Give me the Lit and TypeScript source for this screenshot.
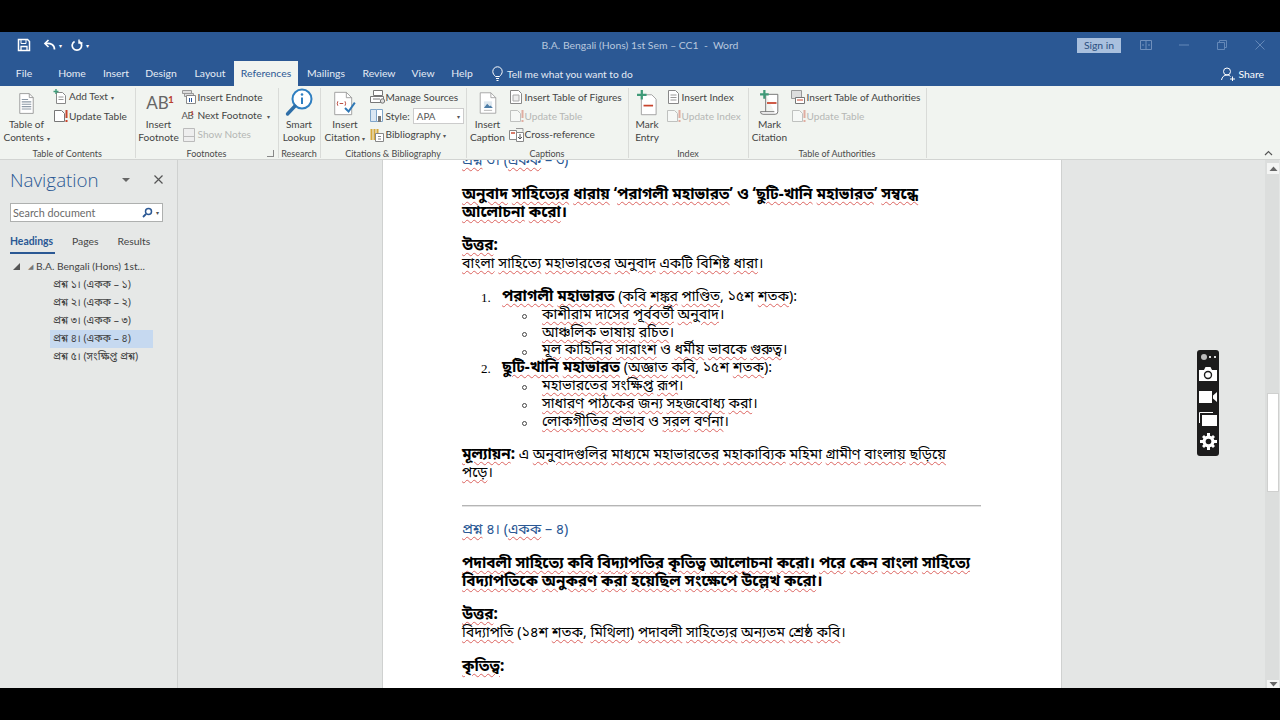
import { LitElement, html, css, svg } from "lit";
import { customElement } from "lit/decorators.js";

const ic = (w: number, h: number, body: unknown, vw = w, vh = h) =>
  html`<svg class="ic" width=${w} height=${h} viewBox="0 0 ${vw} ${vh}" fill="none">${body}</svg>`;

const smallDoc = svg`<path d="M2.5 1.5h7l3 3v10h-10z" fill="#fff" stroke="#888"/><path d="M4.5 6h6M4.5 8.5h6M4.5 11h6" stroke="#999"/>`;
const updDoc = (o: number) => svg`<g opacity=${o}><path d="M1.5 2.5h7l3 3v8h-10z" fill="#fff" stroke="#777"/><path d="M13.5 2v8M13.5 12v2" stroke="#c8442c" stroke-width="2"/></g>`;

const icons = {
  toc: ic(19, 23, svg`<path d="M3.5 1.5h12l5 5v20h-17z" fill="#fff" stroke="#8a8a8a"/><path d="M15.5 1.5v5h5" stroke="#8a8a8a"/><path d="M6 9h8M6 12h12M6 15h12M6 18h12M6 21h12" stroke="#8d99a6" stroke-width="1.4"/>`, 24, 28),
  addText: ic(16, 16, svg`<path d="M3.5 3.5h6l3 3v8h-9z" fill="#fff" stroke="#888"/><path d="M5.5 8h5M5.5 10.5h5" stroke="#999"/><path d="M3 0v5M.5 2.5h5" stroke="#3f9a78" stroke-width="1.4"/>`),
  update: ic(16, 16, updDoc(1)),
  updateDim: ic(16, 16, updDoc(0.4)),
  endnote: ic(16, 16, svg`<path d="M.5 1.5h9v3h-9zM2.5 4.5h9v3h-9z" fill="#ddd" stroke="#999"/><path d="M4.5 6.5h9v8h-9z" fill="#fff" stroke="#888"/><path d="M7.5 9v4M9.5 9v4" stroke="#2b579a"/>`),
  nextFoot: html`<span class="abf">AB<b>1</b></span>`,
  showNotes: ic(16, 16, svg`<path d="M1.5 1.5h11v13h-11z" fill="#eee" stroke="#bbb"/><path d="M1.5 9.5h11" stroke="#bbb"/>`),
  lookup: ic(28, 30, svg`<circle cx="17" cy="11" r="9.5" stroke="#2f7fc1" stroke-width="2" fill="#fff"/><path d="M10 18L2.5 26" stroke="#2f6fa8" stroke-width="3.4" stroke-linecap="round"/><circle cx="17" cy="6.5" r="1.3" fill="#2f7fc1"/><path d="M17 9.5v6.5" stroke="#2f7fc1" stroke-width="2"/>`),
  citation: ic(24, 25, svg`<path d="M1.5 1.5h13l6 6v19h-19z" fill="#fff" stroke="#999"/><path d="M14.5 1.5v6h6" stroke="#999"/><path d="M5 11.5q-1.4 3 0 5M13 11.5q1.4 3 0 5" stroke="#b33b2e"/><path d="M7 14h4" stroke="#b33b2e"/><path d="M13 19l4 4 7-10" stroke="#2f78b5" stroke-width="2.2"/>`, 26, 28),
  sources: ic(16, 16, svg`<path d="M3.5 1.5h9v5h-9z" fill="#fff" stroke="#777"/><path d="M.5 7.5h13v6h-13z" fill="#fff" stroke="#777"/><path d="M3 10h7" stroke="#777"/><circle cx="12.5" cy="12" r="2.2" fill="#ddd" stroke="#777"/>`),
  style: ic(16, 16, svg`<path d="M.5 1.5h6v12h-6z" fill="#dbe7f3" stroke="#7fa5c9"/><path d="M6.5 1.5h6v12h-6z" fill="#fff" stroke="#7fa5c9"/><path d="M8 8h3v6H8z" fill="#777"/>`),
  biblio: ic(16, 16, svg`<path d="M1.5 2v11M4.5 2v11M7.5 2v11" stroke="#d5a83c" stroke-width="2"/><path d="M5.5 6.5h8v8h-8z" fill="#fff" stroke="#888"/><path d="M8 9.5h3M8 12h3" stroke="#888"/>`),
  caption: ic(18, 24, svg`<path d="M1.5 1.5h13l6 6v19h-19z" fill="#fff" stroke="#999"/><path d="M14.5 1.5v6h6" stroke="#999"/><path d="M6 12h10v8H6z" fill="#dfe8ef"/><path d="M6 20l4-5 3 3 1-1 3 3z" fill="#4e7ea8"/><path d="M6 23h10" stroke="#aaa"/>`, 22, 28),
  figures: ic(16, 16, svg`<path d="M1.5 1.5h8l3 3v10h-11z" fill="#fff" stroke="#888"/><path d="M4 6h6v6H4z" fill="#eee" stroke="#aaa"/>`),
  crossref: ic(16, 16, svg`<path d="M.5 3.5h7v9h-7z" fill="#fff" stroke="#888"/><path d="M2 6h4" stroke="#c8442c" stroke-width="1.4"/><path d="M7.5 5.5h7v9h-7z" fill="#fff" stroke="#888"/><path d="M11 7v5M9 10l2 2 2-2" stroke="#555"/><path d="M7 1.5h7v3" stroke="#999"/>`),
  markEntry: ic(22, 26, svg`<path d="M5.5 5.5h12l5 5v18h-17z" fill="#fff" stroke="#999"/><path d="M8 18h11" stroke="#c8442c" stroke-width="2"/><path d="M6 0v11M.5 5.5h11" stroke="#3f9a78" stroke-width="2.6"/>`, 24, 30),
  index: ic(16, 16, smallDoc),
  markCite: ic(26, 26, svg`<path d="M7 5h14v20q0 3-3 3H4q-3 0-3-3h16" fill="#fff" stroke="#666"/><path d="M7 5v20" stroke="#666"/><path d="M8.5 15h11" stroke="#c8442c" stroke-width="2"/><path d="M5.5 0v10M.5 5h10" stroke="#3f9a78" stroke-width="2.6"/>`, 24, 30),
  authorities: ic(16, 16, svg`<path d="M.5 1.5h10v8H.5z" fill="#ddd" stroke="#999"/><path d="M4.5 8.5h9v6h-9z" fill="#fff" stroke="#777"/><path d="M6 11h6" stroke="#c8442c"/>`),
};

const W = (t: string) => html`<u>${t}</u>`;

@customElement("app-root")
export class AppRoot extends LitElement {
  static styles = css`
    :host { display: block; width: 1280px; height: 720px; background: #000; overflow: hidden; font-family: Lato, "Liberation Sans", sans-serif; padding-top: 32px; box-sizing: border-box; }
    .win { height: 656px; display: flex; flex-direction: column; }
    .ic { display: block; flex: none; }

    .title { height: 29px; background: #2b5894; display: grid; grid-template-columns: 1fr auto 1fr; align-items: center; color: #fff; padding-bottom: 3px; box-sizing: border-box; }
    .qat { display: flex; align-items: center; padding-left: 17px; }
    .qat .m1 { margin-left: 12px; }
    .qat .m2 { margin-left: 9px; }
    .qat .m3 { margin-left: 15px; }
    .qat .dd { font-size: 6px; margin-left: 3px; }
    .doc-title { font-size: 10.4px; color: #b9c8de; }
    .win-ctl { display: flex; align-items: center; justify-content: flex-end; padding-right: 1px; }
    .sign { width: 44px; height: 15px; background: #a9c0de; color: #2b4f80; font-size: 10.4px; line-height: 15px; text-align: center; margin-right: 6px; }
    .win-ctl .b { width: 38px; display: flex; justify-content: center; }

    .tabs { height: 25px; background: #2b5894; display: flex; align-items: flex-end; color: #e6ecf5; font-size: 10.4px; }
    .tab { height: 25px; line-height: 25px; flex: none; text-align: center; }
    .tab.on { background: #f1f4f0; color: #2b5894; }
    .tell { display: flex; align-items: center; gap: 4px; height: 25px; margin-left: 10px; font-size: 10.2px; }
    .share { margin-left: auto; margin-right: 16px; display: flex; align-items: center; gap: 3px; height: 25px; color: #fff; }

    .ribbon { height: 74px; background: #f1f4f0; border-bottom: 1px solid #d2d4d2; display: flex; position: relative; box-sizing: border-box; color: #444; font-size: 10.1px; line-height: 13px; flex: none; z-index: 1; }
    .grp { display: grid; grid-template-rows: 59px 13px; border-right: 1px solid #d9dbd8; margin: 2px 0 0; box-sizing: border-box; height: 70px; flex: none; }
    .grp .body { display: flex; min-width: 0; }
    .grp .label { text-align: center; font-size: 9px; color: #4a4a4a; line-height: 13px; white-space: nowrap; }
    .grp .label.l { position: relative; }
    .launch { position: absolute; right: 4px; top: 3px; width: 6px; height: 6px; border: 1px solid #888; border-width: 0 1px 1px 0; }
    .big { display: flex; flex-direction: column; align-items: center; flex: none; text-align: center; white-space: nowrap; }
    .big .ico { height: 30px; display: flex; align-items: center; justify-content: center; }
    .col { display: flex; flex-direction: column; flex: none; }
    .row { height: 18.7px; display: flex; align-items: center; white-space: nowrap; }
    .dim { color: #b5b7b5; }
    .caret { font-size: 6px; color: #555; }
    .abf { font-size: 9.5px; color: #555; width: 16px; position: relative; letter-spacing: -0.5px; line-height: 14px; flex: none; }
    .abf b { color: #c0392b; font-size: 6px; position: absolute; top: -3px; left: 9px; }
    .abl { font-size: 17px; color: #666; line-height: 30px; position: relative; padding-right: 2px; }
    .abl b { color: #b9402f; font-size: 10px; position: absolute; top: 1px; right: -3px; line-height: 20px; }
    .sel { width: 51px; height: 16px; border: 1px solid #ccc; background: #fff; display: flex; align-items: center; justify-content: space-between; padding: 0 3px; box-sizing: border-box; color: #555; font-size: 9.8px; margin-left: 3px; }
    .collapse { position: absolute; right: 7px; bottom: 3px; }

    .main { flex: 1; display: flex; min-height: 0; background: #e4e6e5; position: relative; }
    .nav { width: 177px; flex: none; background: #e6e8e7; border-right: 1px solid #cfd1d0; color: #444; }
    .nav-h { display: flex; align-items: center; padding: 6px 14px 0 10px; height: 27px; }
    .nav-h .n { font-family: "Open Sans", sans-serif; font-size: 18.8px; color: #2b5894; flex: 1; font-weight: 300; }
    .nav-h .tri { width: 0; height: 0; border: 4px solid transparent; border-top: 4px solid #666; border-bottom: 0; margin-right: 24px; }
    .search { margin: 10px 0 0 10px; width: 153px; height: 19px; box-sizing: border-box; background: #fff; border: 1px solid #aeb0af; display: flex; align-items: center; padding: 0 3px 0 2px; font-size: 10.8px; color: #6a6a6a; }
    .search span { flex: 1; }
    .ntabs { display: flex; margin: 10px 0 0 10px; font-size: 10.4px; height: 20px; position: relative; }
    .ntabs div { line-height: 18px; }
    .ntabs .on { font-weight: 700; color: #2b5894; border-bottom: 2.5px solid #2b5894; width: 45px; height: 20px; }
    .tree { margin-top: 4px; font-size: 10.2px; }
    .tree .root { height: 20px; display: flex; align-items: center; padding-left: 13px; white-space: nowrap; }
    .tree .root .tr { width: 0; height: 0; border-left: 7px solid transparent; border-bottom: 7px solid #555; margin-right: 8px; }
    .tree .root .cr { font-size: 7px; color: #777; margin-right: 3px; }
    .tree .it { height: 18px; line-height: 18px; margin-left: 50px; width: 103px; padding-left: 3px; box-sizing: border-box; white-space: nowrap; font-family: "Noto Sans Bengali", "Noto Sans", sans-serif; font-size: 10.4px; }
    .tree .it.sel2 { background: #c6d9f0; }

    .area { flex: 1; display: flex; min-width: 0; overflow: hidden; padding-left: 204px; }
    .page { flex: none; width: 680px; height: 100%; background: #fff; border: solid #cfd1d0; border-width: 0 1px; box-sizing: border-box; padding: 0 80px 0 79px; overflow: hidden; color: #000; font-family: "Noto Sans Bengali", "Noto Serif Bengali", "Liberation Serif", serif; font-size: 14.2px; line-height: 17.8px; }
    .page p { margin: 0; white-space: nowrap; height: 17.8px; }
    .page b { font-size: 15.3px; line-height: 17.8px; }
    .page u { text-decoration: underline wavy #dc6460 0.7px; text-underline-offset: 1.5px; }
    .page .sp { height: 16px; }
    .page .sp.t { height: 15px; }
    .page .head { color: #2b5894; }
    .page .clip { margin-top: -7px; }
    .page hr { border: 0; border-top: 1px solid #b5b5b5; border-bottom: 1px solid #e2e2e2; margin: 22px 0 15px; }
    .li1 { display: flex; padding-left: 19px; }
    .li1 .num { flex: none; width: 21px; font-family: "Liberation Serif", serif; font-size: 13px; }
    .li2 { display: flex; padding-left: 60px; }
    .li2 .b { width: 20px; flex: none; display: flex; align-items: center; padding-top: 2px; box-sizing: border-box; }
    .li2 .b i { width: 5px; height: 5px; border: 1px solid #444; border-radius: 50%; display: block; box-sizing: border-box; }

    .sbar { width: 12px; flex: none; background: #dcdedd; display: flex; flex-direction: column; margin-right: 1px; padding-left: 2px; }
    .sbar .thumb { height: 99px; background: #fff; border: 1px solid #cfd0cf; box-sizing: border-box; margin-top: 219px; }
    .sbar .arr { height: 11px; background: #f4f5f4; margin-top: 3px; display: flex; align-items: center; justify-content: center; }
    .sbar .arr.dn { height: 8px; margin: 0; }
    .sbar .grow { flex: 1; }

    .widget { position: absolute; left: 1197px; top: 190px; width: 22px; height: 106px; background: #1c1c1c; border-radius: 3px; display: flex; flex-direction: column; align-items: center; padding-top: 2px; box-sizing: border-box; }
    .widget .s { height: 22.5px; display: flex; align-items: center; justify-content: center; }
    .widget .top { height: 10px; display: flex; gap: 2px; align-items: center; margin-bottom: 1px; }
    .dot { width: 6px; height: 6px; border-radius: 50%; background: #bbb; display: block; }
    .dots { width: 7px; border-top: 2px dotted #ddd; display: block; }
  `;

  bigBtn(icon: unknown, l1: string, l2: string, w: number, dd = false) {
    return html`<div class="big" style="width:${w}px"><div class="ico">${icon}</div><div class="t">${l1}<br />${l2}${dd ? html` <span class="caret">▾</span>` : ""}</div></div>`;
  }

  render() {
    return html`<div class="win">
      <div class="title">
        <div class="qat">
          ${ic(14, 14, svg`<path d="M1.5 1.5h9l2 2v9h-11z" stroke="#fff" stroke-width="1.5"/><path d="M4 2v3.5h5V2" stroke="#fff"/><path d="M4 12V8.5h6V12" stroke="#fff" stroke-width="1.3"/>`)}
          <span class="m1">${ic(13, 12, svg`<path d="M11.5 10.5C11.5 5.5 8 4 2.5 4.5" stroke="#fff" stroke-width="1.7"/><path d="M5.5 1L2 4.5 5.5 8" stroke="#fff" stroke-width="1.7"/>`)}</span>
          <span class="dd">▾</span>
          <span class="m2">${ic(12, 13, svg`<path d="M8.2 2.4a4.7 4.7 0 1 1-4.6 0" stroke="#fff" stroke-width="1.7"/><path d="M8 .5V4h3.5" stroke="#fff" stroke-width="1.4"/>`)}</span>
          <span class="m3 dd">▾</span>
        </div>
        <div class="doc-title">B.A. Bengali (Hons) 1st Sem – CC1 &nbsp;-&nbsp; Word</div>
        <div class="win-ctl">
          <div class="sign">Sign in</div>
          <div class="b">${ic(12, 10, svg`<path d="M.5.5h11v9H.5zM6 .5v9M2 5h2M8 5h2" stroke="#6f8fbc"/>`)}</div>
          <div class="b">${ic(10, 10, svg`<path d="M0 5h10" stroke="#6488b8"/>`)}</div>
          <div class="b">${ic(10, 10, svg`<path d="M.5 2.5h7v7h-7zM2.5 2.5v-2h7v7h-2" stroke="#6488b8"/>`)}</div>
          <div class="b">${ic(10, 10, svg`<path d="M.5.5l9 9M9.5.5l-9 9" stroke="#6488b8"/>`)}</div>
        </div>
      </div>

      <div class="tabs">
        <div class="tab" style="width:48px">File</div>
        <div class="tab" style="width:48px">Home</div>
        <div class="tab" style="width:40px">Insert</div>
        <div class="tab" style="width:50px">Design</div>
        <div class="tab" style="width:48px">Layout</div>
        <div class="tab on" style="width:64px">References</div>
        <div class="tab" style="width:56px">Mailings</div>
        <div class="tab" style="width:50px">Review</div>
        <div class="tab" style="width:38px">View</div>
        <div class="tab" style="width:40px">Help</div>
        <div class="tell">${ic(11, 15, svg`<path d="M3.5 10.5C2 9 .8 7.5.8 5.5a4.7 4.7 0 0 1 9.4 0c0 2-1.2 3.5-2.7 5zM4 12.5h3M4.5 14.5h2" stroke="#fff"/>`)}<span>Tell me what you want to do</span></div>
        <div class="share">${ic(14, 14, svg`<circle cx="6" cy="4.5" r="3.5" stroke="#fff"/><path d="M.5 13c.5-3 2.5-5 5.5-5 1.5 0 2.500.5 3.500 1.5M9 12h5M11.500 9.500v5" stroke="#fff"/>`)}<span>Share</span></div>
      </div>

      <div class="ribbon">
        <div class="grp" style="width:135.5px">
          <div class="body">
            ${this.bigBtn(icons.toc, "Table of", "Contents", 53, true)}
            <div class="col">
              <div class="row">${icons.addText}<span>Add Text <span class="caret">▾</span></span></div>
              <div class="row">${icons.update}<span>Update Table</span></div>
            </div>
          </div>
          <div class="label">Table of Contents</div>
        </div>
        <div class="grp" style="width:143px">
          <div class="body">
            ${this.bigBtn(html`<span class="abl">AB<b>1</b></span>`, "Insert", "Footnote", 46)}
            <div class="col">
              <div class="row">${icons.endnote}<span>Insert Endnote</span></div>
              <div class="row">${icons.nextFoot}<span>Next Footnote &nbsp;<span class="caret">▾</span></span></div>
              <div class="row dim">${icons.showNotes}<span>Show Notes</span></div>
            </div>
          </div>
          <div class="label l">Footnotes<i class="launch"></i></div>
        </div>
        <div class="grp" style="width:42px">
          <div class="body">${this.bigBtn(icons.lookup, "Smart", "Lookup", 41)}</div>
          <div class="label">Research</div>
        </div>
        <div class="grp" style="width:146px">
          <div class="body">
            ${this.bigBtn(icons.citation, "Insert", "Citation", 49, true)}
            <div class="col">
              <div class="row">${icons.sources}<span>Manage Sources</span></div>
              <div class="row">${icons.style}<span>Style:</span><div class="sel"><span>APA</span><span class="caret">▾</span></div></div>
              <div class="row">${icons.biblio}<span>Bibliography <span class="caret">▾</span></span></div>
            </div>
          </div>
          <div class="label">Citations &amp; Bibliography</div>
        </div>
        <div class="grp" style="width:162px">
          <div class="body">
            ${this.bigBtn(icons.caption, "Insert", "Caption", 42)}
            <div class="col">
              <div class="row">${icons.figures}<span>Insert Table of Figures</span></div>
              <div class="row dim">${icons.updateDim}<span>Update Table</span></div>
              <div class="row">${icons.crossref}<span>Cross-reference</span></div>
            </div>
          </div>
          <div class="label">Captions</div>
        </div>
        <div class="grp" style="width:120px">
          <div class="body">
            ${this.bigBtn(icons.markEntry, "Mark", "Entry", 37)}
            <div class="col">
              <div class="row">${icons.index}<span>Insert Index</span></div>
              <div class="row dim">${icons.updateDim}<span>Update Index</span></div>
            </div>
          </div>
          <div class="label">Index</div>
        </div>
        <div class="grp" style="width:178px">
          <div class="body">
            ${this.bigBtn(icons.markCite, "Mark", "Citation", 42)}
            <div class="col">
              <div class="row">${icons.authorities}<span>Insert Table of Authorities</span></div>
              <div class="row dim">${icons.updateDim}<span>Update Table</span></div>
            </div>
          </div>
          <div class="label">Table of Authorities</div>
        </div>
        <div class="collapse">${ic(9, 6, svg`<path d="M1 5l3.5-3.5L8 5" stroke="#555" stroke-width="1.2"/>`)}</div>
      </div>

      <div class="main">
        <div class="nav">
          <div class="nav-h"><span class="n">Navigation</span><span class="tri"></span>${ic(9, 9, svg`<path d="M.5.5l8 8M8.5.5l-8 8" stroke="#555" stroke-width="1.2"/>`)}</div>
          <div class="search"><span>Search document</span>${ic(11, 11, svg`<circle cx="6.5" cy="4.5" r="3" stroke="#2b5894" stroke-width="1.5"/><path d="M4 7l-3 3" stroke="#2b5894" stroke-width="1.8"/>`)}<span class="caret" style="flex:none;margin-left:3px">▾</span></div>
          <div class="ntabs">
            <div class="on">Headings</div>
            <div style="margin-left:17px">Pages</div>
            <div style="margin-left:19px">Results</div>
          </div>
          <div class="tree">
            <div class="root"><i class="tr"></i><span class="cr">◢</span><span>B.A. Bengali (Hons) 1st...</span></div>
            <div class="it">প্রশ্ন ১। (একক – ১)</div>
            <div class="it">প্রশ্ন ২। (একক – ২)</div>
            <div class="it">প্রশ্ন ৩। (একক – ৩)</div>
            <div class="it sel2">প্রশ্ন ৪। (একক – ৪)</div>
            <div class="it">প্রশ্ন ৫। (সংক্ষিপ্ত প্রশ্ন)</div>
          </div>
        </div>
        <div class="area">
          <div class="page">
            <p class="head clip">${W("প্রশ্ন")} ৩। (${W("একক")} – ৩)</p>
            <div class="sp"></div>
            <p><b>${W("অনুবাদ")} ${W("সাহিত্যের")} ${W("ধারায়")} ‘${W("পরাগলী")} ${W("মহাভারত")}’ ও ‘${W("ছুটি-খানি")} ${W("মহাভারত")}’ ${W("সম্বন্ধে")}</b></p>
            <p><b>${W("আলোচনা")} ${W("করো")}।</b></p>
            <div class="sp"></div>
            <p><b>${W("উত্তর")}:</b></p>
            <p>${W("বাংলা")} ${W("সাহিত্যে")} ${W("মহাভারতের")} ${W("অনুবাদ")} ${W("একটি")} ${W("বিশিষ্ট")} ${W("ধারা")}।</p>
            <div class="sp t"></div>
            <div class="li1"><span class="num">1.</span><p><b>${W("পরাগলী")} ${W("মহাভারত")}</b> (${W("কবি")} ${W("শঙ্কর")} ${W("পাণ্ডিত")}, ১৫শ ${W("শতক")}):</p></div>
            <div class="li2"><span class="b"><i></i></span><p>${W("কাশীরাম")} ${W("দাসের")} ${W("পূর্ববর্তী")} ${W("অনুবাদ")}।</p></div>
            <div class="li2"><span class="b"><i></i></span><p>${W("আঞ্চলিক")} ${W("ভাষায়")} ${W("রচিত")}।</p></div>
            <div class="li2"><span class="b"><i></i></span><p>${W("মূল")} ${W("কাহিনির")} ${W("সারাংশ")} ও ${W("ধর্মীয়")} ${W("ভাবকে")} ${W("গুরুত্ব")}।</p></div>
            <div class="li1"><span class="num">2.</span><p><b>${W("ছুটি-খানি")} ${W("মহাভারত")}</b> (${W("অজ্ঞাত")} ${W("কবি")}, ১৫শ ${W("শতক")}):</p></div>
            <div class="li2"><span class="b"><i></i></span><p>${W("মহাভারতের")} ${W("সংক্ষিপ্ত")} ${W("রূপ")}।</p></div>
            <div class="li2"><span class="b"><i></i></span><p>${W("সাধারণ")} ${W("পাঠকের")} ${W("জন্য")} ${W("সহজবোধ্য")} ${W("করা")}।</p></div>
            <div class="li2"><span class="b"><i></i></span><p>${W("লোকগীতির")} ${W("প্রভাব")} ও ${W("সরল")} ${W("বর্ণনা")}।</p></div>
            <div class="sp"></div>
            <p><b>${W("মূল্যায়ন")}:</b> এ ${W("অনুবাদগুলির")} ${W("মাধ্যমে")} ${W("মহাভারতের")} ${W("মহাকাব্যিক")} ${W("মহিমা")} ${W("গ্রামীণ")} ${W("বাংলায়")} ${W("ছড়িয়ে")}</p>
            <p>${W("পড়ে")}।</p>
            <hr />
            <p class="head">${W("প্রশ্ন")} ৪। (${W("একক")} – ৪)</p>
            <div class="sp"></div>
            <p><b>${W("পদাবলী")} ${W("সাহিত্যে")} ${W("কবি")} ${W("বিদ্যাপতির")} ${W("কৃতিত্ব")} ${W("আলোচনা")} ${W("করো")}। ${W("পরে")} ${W("কেন")} ${W("বাংলা")} ${W("সাহিত্যে")}</b></p>
            <p><b>${W("বিদ্যাপতিকে")} ${W("অনুকরণ")} ${W("করা")} ${W("হয়েছিল")} ${W("সংক্ষেপে")} ${W("উল্লেখ")} ${W("করো")}।</b></p>
            <div class="sp"></div>
            <p><b>${W("উত্তর")}:</b></p>
            <p>${W("বিদ্যাপতি")} (১৪শ ${W("শতক")}, ${W("মিথিলা")}) ${W("পদাবলী")} ${W("সাহিত্যের")} ${W("অন্যতম")} ${W("শ্রেষ্ঠ")} ${W("কবি")}।</p>
            <div class="sp"></div>
            <p><b>${W("কৃতিত্ব")}:</b></p>
          </div>
        </div>
        <div class="sbar">
          <div class="arr">${ic(9, 5, svg`<path d="M.5 5L4.5 .5 8.5 5z" fill="#666"/>`)}</div>
          <div class="thumb"></div>
          <div class="grow"></div>
          <div class="arr dn">${ic(9, 5, svg`<path d="M.5 0L4.5 4.5 8.5 0z" fill="#666"/>`)}</div>
        </div>
        <div class="widget">
          <div class="top"><i class="dot"></i><i class="dots"></i></div>
          <div class="s">${ic(18, 14, svg`<path d="M0 3h5l1.5-3h5L13 3h5v11H0z" fill="#fff"/><circle cx="9" cy="8" r="3.5" fill="#fff" stroke="#1c1c1c" stroke-width="1.4"/>`)}</div>
          <div class="s">${ic(18, 12, svg`<path d="M0 0h13v12H0zM14 4.5L18 1v10l-4-3.5z" fill="#fff"/>`)}</div>
          <div class="s">${ic(18, 14, svg`<path d="M.5 11V.5H14" stroke="#fff"/><path d="M3 3h15v11H3z" fill="#fff"/>`)}</div>
          <div class="s">${ic(17, 17, svg`<g fill="#fff"><circle cx="8.5" cy="8.5" r="6"/><path d="M7 0h3v3H7zM7 14h3v3H7zM0 7h3v3H0zM14 7h3v3h-3zM2 4l2-2 2.5 2.5-2 2zM15 13l-2 2-2.5-2.5 2-2zM13 2l2 2-2.5 2.5-2-2zM4 15l-2-2 2.5-2.5 2 2z"/></g><circle cx="8.5" cy="8.5" r="2.8" fill="#1c1c1c"/>`)}</div>
        </div>
      </div>
    </div>`;
  }
}
